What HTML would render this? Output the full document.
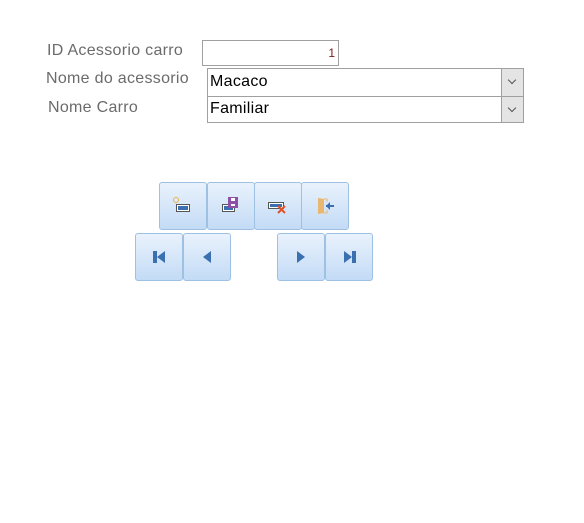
<html><head><style>
body{margin:0;width:584px;height:523px;background:#fff;font-family:"Liberation Sans",sans-serif;position:relative;overflow:hidden}
.l{position:absolute;color:#6b6b6b;font-size:16px;letter-spacing:0.3px}
.box{position:absolute;border:1px solid #a0a0a0;background:#fff;box-sizing:border-box}
.cb{position:absolute;right:0;top:0;bottom:0;width:21px;background:#e4e4e4;border-left:1px solid #a0a0a0}
.cb:after{content:"";position:absolute;left:7px;top:8px;width:5px;height:5px;border-right:1px solid #555;border-bottom:1px solid #555;transform:rotate(45deg)}
.v{position:absolute;left:2px;top:3px;font-size:16px;color:#000;letter-spacing:0.3px}
.b{position:absolute;width:48px;height:48px;box-sizing:border-box;border:1px solid #9dc0e3;border-radius:3px;background:linear-gradient(#e9f2fc,#c3dbf6)}
.b svg{position:absolute;left:11px;top:11px}
</style></head><body>
<div class="l" style="left:47px;top:42px">ID Acessorio carro</div>
<div class="l" style="left:46px;top:70px">Nome do acessorio</div>
<div class="l" style="left:48px;top:99px">Nome Carro</div>
<div class="box" style="left:202px;top:40px;width:137px;height:26px"><span style="position:absolute;right:3px;top:5px;font-size:12px;color:#7a1a1a">1</span></div>
<div class="box" style="left:207px;top:68px;width:317px;height:29px"><span class="v" style="top:4px">Macaco</span><div class="cb"></div></div>
<div class="box" style="left:207px;top:96px;width:317px;height:27px"><span class="v">Familiar</span><div class="cb"></div></div>

<div class="b" style="left:159px;top:182px"><svg width="26" height="26"><circle cx="5" cy="6" r="2.5" fill="none" stroke="#f0b040"/><rect x="5.5" y="10.5" width="13" height="7" fill="#fff" stroke="#555"/><rect x="7" y="12" width="10" height="4" fill="#3a6fb0"/></svg></div>
<div class="b" style="left:207px;top:182px"><svg width="26" height="26"><rect x="3.5" y="10.5" width="12" height="7" fill="#fff" stroke="#555"/><rect x="5" y="12" width="9" height="4" fill="#3a6fb0"/><rect x="9" y="3" width="10" height="11" fill="#8e4fa6"/><rect x="12" y="4" width="4" height="3" fill="#fff"/><rect x="12" y="10" width="4" height="2" fill="#fff"/></svg></div>
<div class="b" style="left:254px;top:182px"><svg width="26" height="26"><rect x="2.5" y="8.5" width="15" height="6" fill="#fff" stroke="#555"/><rect x="4" y="10" width="12" height="3" fill="#3a6fb0"/><path d="M12 12l7 7M19 12l-7 7" stroke="#e0502a" stroke-width="2"/></svg></div>
<div class="b" style="left:301px;top:182px"><svg width="26" height="26"><path d="M5 4l6 1v14l-6 1z" fill="#e8b870"/><path d="M11 5h3v3M14 16v3h-3" fill="none" stroke="#e8b870"/><path d="M13 12h8" stroke="#3a6fb0" stroke-width="2"/><path d="M17 8l-4 4 4 4z" fill="#3a6fb0"/></svg></div>

<div class="b" style="left:135px;top:233px"><svg width="26" height="26"><rect x="6" y="6" width="4" height="12" fill="#3a6fb0"/><path d="M10 12l8-6v12z" fill="#3a6fb0"/></svg></div>
<div class="b" style="left:183px;top:233px"><svg width="26" height="26"><path d="M8 12l8-6v12z" fill="#3a6fb0"/></svg></div>
<div class="b" style="left:277px;top:233px"><svg width="26" height="26"><path d="M16 12l-8-6v12z" fill="#3a6fb0"/></svg></div>
<div class="b" style="left:325px;top:233px"><svg width="26" height="26"><path d="M15 12l-8-6v12z" fill="#3a6fb0"/><rect x="15" y="6" width="4" height="12" fill="#3a6fb0"/></svg></div>
</body></html>
